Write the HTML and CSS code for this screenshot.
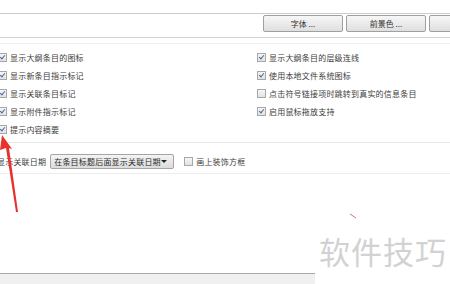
FILE: index.html
```html
<!DOCTYPE html>
<html lang="zh">
<head>
    <meta charset="UTF-8">
    <meta name="viewport" content="width=device-width, initial-scale=1.0">
    <title>选项</title>
    <link rel="stylesheet" href="styles.css">
</head>
<body>
    <div class="page">
        <div class="toolbar">
            <button class="btn">字体 ...</button>
            <button class="btn">前景色 ...</button>
            <button class="btn"></button>
        </div>
        <div class="options">
            <div class="col col-left">
                <label class="opt"><span class="box on"></span>显示大纲条目的图标</label>
                <label class="opt"><span class="box on"></span>显示新条目指示标记</label>
                <label class="opt"><span class="box on"></span>显示关联条目标记</label>
                <label class="opt"><span class="box on"></span>显示附件指示标记</label>
                <label class="opt"><span class="box on"></span>提示内容摘要</label>
            </div>
            <div class="col col-right">
                <label class="opt"><span class="box on"></span>显示大纲条目的层级连线</label>
                <label class="opt"><span class="box on"></span>使用本地文件系统图标</label>
                <label class="opt"><span class="box"></span>点击符号链接项时跳转到真实的信息条目</label>
                <label class="opt"><span class="box on"></span>启用鼠标拖放支持</label>
            </div>
        </div>
        <div class="daterow">
            <span class="date-label">显示关联日期</span>
            <div class="select">在条目标题后面显示关联日期<span class="caret"></span></div>
            <label class="opt"><span class="box"></span>画上装饰方框</label>
        </div>
        <div class="spacer"></div>
        <div class="status"></div>
    </div>

    <div class="watermark">软件技巧</div>
    <svg class="arrow" width="30" height="95" viewBox="0 0 30 95">
        <polygon points="2,15 0,30 6,28 16,92 18,92 9,28 12,29" fill="#e8322c"/>
    </svg>
    <svg class="dash" width="10" height="8" viewBox="0 0 10 8">
        <line x1="1" y1="1" x2="7" y2="5" stroke="#c8786a" stroke-width="1"/>
    </svg>
</body>
</html>
```

FILE: styles.css
```css
body {
    margin: 0;
    background-color: #fff;
    font-family: "Noto Sans CJK SC", "Noto Sans", sans-serif;
    font-size: 8px;
    letter-spacing: 0.2px;
    color: #3c3c3c;
    position: relative;
    height: 284px;
    overflow: hidden;
}

.page {
    display: flex;
    flex-direction: column;
    height: 284px;
}

.toolbar {
    margin-top: 13px;
    border-top: 1px solid #c9ccca;
    border-bottom: 1px solid #d4d4d4;
    height: 22px;
    display: flex;
    gap: 3px;
    padding-left: 263px;
    padding-top: 1px;
}

.btn {
    width: 80px;
    height: 17px;
    flex-shrink: 0;
    border: 1px solid #a0a0a0;
    border-radius: 2px;
    background: linear-gradient(#f7f7f7, #dfdfdf);
    font-family: inherit;
    font-size: 8px;
    color: #333;
    padding: 0;
    line-height: 14px;
}

.options {
    margin-top: 5px;
    border-top: 1px solid #efefef;
    display: flex;
    padding-top: 4px;
    height: 94px;
}

.col {
    display: flex;
    flex-direction: column;
}

.col-left {
    margin-left: -2px;
    width: 259px;
}

.opt {
    display: flex;
    align-items: center;
    height: 18px;
    white-space: nowrap;
}

.box {
    width: 7px;
    height: 7px;
    border: 1px solid #a8a8a8;
    background: linear-gradient(#f6f6f6, #e2e2e2);
    margin-right: 3px;
    position: relative;
    flex-shrink: 0;
}

.box.on::after {
    content: "";
    position: absolute;
    left: 2px;
    top: 0px;
    width: 2px;
    height: 4px;
    border-right: 1.5px solid #4a6aa0;
    border-bottom: 1.5px solid #4a6aa0;
    transform: rotate(40deg);
}

.daterow {
    border-top: 1px solid #e6e6e6;
    border-bottom: 1px solid #ececec;
    height: 32px;
    box-sizing: border-box;
    padding-top: 7px;
    display: flex;
    align-items: center;
    margin-left: -3px;
    gap: 4px;
}

.select {
    width: 119px;
    height: 13px;
    border: 1px solid #a5a5a5;
    border-radius: 2px;
    background: linear-gradient(#f4f4f4, #dcdcdc);
    display: flex;
    align-items: center;
    padding-left: 3px;
    color: #2a2a2a;
    position: relative;
    margin-right: 6px;
}

.caret {
    position: absolute;
    right: 6px;
    top: 5px;
    border-left: 3px solid transparent;
    border-right: 3px solid transparent;
    border-top: 3px solid #222;
}

.spacer {
    flex: 1;
}

.status {
    width: 315px;
    height: 10px;
    border-top: 1px solid #aaa;
    background-color: #f0f0f0;
}

.watermark {
    position: absolute;
    left: 319px;
    top: 228px;
    font-size: 31px;
    letter-spacing: 1px;
    color: #d2d2d2;
}

.arrow {
    position: absolute;
    left: 0;
    top: 120px;
}

.dash {
    position: absolute;
    left: 349px;
    top: 213px;
}
```
